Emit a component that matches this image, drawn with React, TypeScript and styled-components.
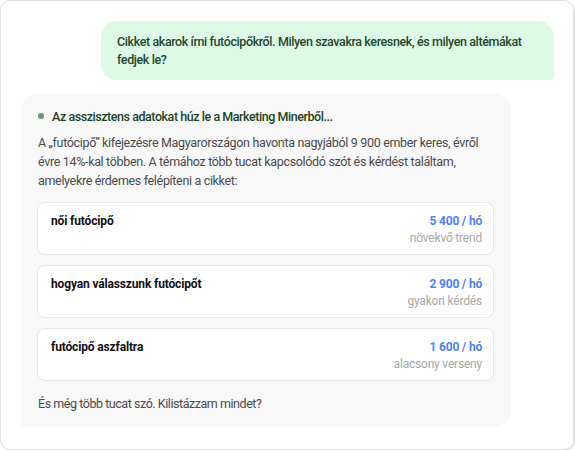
import styled, { createGlobalStyle } from "styled-components";

const GlobalStyle = createGlobalStyle`
  html, body {
    margin: 0;
    padding: 0;
    background: #ffffff;
  }
  * {
    box-sizing: border-box;
  }
`;

type Keyword = {
  term: string;
  volume: string;
  note: string;
};

const keywords: Keyword[] = [
  { term: "női futócipő", volume: "5 400 / hó", note: "növekvő trend" },
  { term: "hogyan válasszunk futócipőt", volume: "2 900 / hó", note: "gyakori kérdés" },
  { term: "futócipő aszfaltra", volume: "1 600 / hó", note: "alacsony verseny" },
];

const App = () => {
  return (
    <>
      <GlobalStyle />
      <Frame>
        <UserBubble>
          Cikket akarok írni futócipőkről. Milyen szavakra keresnek, és milyen altémákat
          fedjek le?
        </UserBubble>
        <AssistantBubble>
          <Status>
            <Dot />
            Az asszisztens adatokat húz le a Marketing Minerből...
          </Status>
          <Paragraph>
            A „futócipő” kifejezésre Magyarországon havonta nagyjából 9 900 ember keres, évről
            évre 14%-kal többen. A témához több tucat kapcsolódó szót és kérdést találtam,
            amelyekre érdemes felépíteni a cikket:
          </Paragraph>
          <KeywordList>
            {keywords.map((item) => (
              <KeywordCard key={item.term}>
                <Term>{item.term}</Term>
                <Stats>
                  <Volume>{item.volume}</Volume>
                  <Note>{item.note}</Note>
                </Stats>
              </KeywordCard>
            ))}
          </KeywordList>
          <Footnote>És még több tucat szó. Kilistázzam mindet?</Footnote>
        </AssistantBubble>
      </Frame>
    </>
  );
};

export default App;

const Frame = styled.div`
  width: 574px;
  height: 450px;
  border: 1px solid #e2e2e2;
  border-radius: 10px;
  box-shadow: 1px 1px 0 #e2e2e2;
  padding: 20px 19px 0 20px;
  display: flex;
  flex-direction: column;
  gap: 14px;
  font-family: Roboto, "Liberation Sans", sans-serif;
`;

const UserBubble = styled.div`
  align-self: flex-end;
  width: 453px;
  background: #ddfae6;
  color: #24482b;
  font-size: 12.5px;
  font-weight: 500;
  line-height: 18px;
  letter-spacing: -0.4px;
  padding: 12px 16px 11px 16px;
  border-radius: 16px 16px 4px 16px;
`;

const AssistantBubble = styled.div`
  width: 490px;
  background: #f8f8f8;
  border-radius: 16px 16px 16px 4px;
  padding: 13px 17px 14px 16px;
  display: flex;
  flex-direction: column;
`;

const Status = styled.div`
  display: flex;
  align-items: center;
  gap: 8px;
  padding-left: 1px;
  height: 18px;
  color: #1c4527;
  font-size: 12.5px;
  font-weight: 500;
  letter-spacing: -0.45px;
  margin-bottom: 8px;
`;

const Dot = styled.span`
  width: 6px;
  height: 6px;
  border-radius: 50%;
  background: #5f9a74;
`;

const Paragraph = styled.p`
  margin: 0;
  padding-left: 1px;
  color: #4b4b4b;
  font-size: 12.5px;
  line-height: 19px;
  letter-spacing: -0.33px;
`;

const Footnote = styled(Paragraph)`
  letter-spacing: -0.45px;
`;

const KeywordList = styled.div`
  display: flex;
  flex-direction: column;
  gap: 10px;
  margin: 12px 0 13px 0;
`;

const KeywordCard = styled.div`
  display: flex;
  justify-content: space-between;
  align-items: flex-start;
  background: #ffffff;
  border: 1px solid #e6e6e6;
  border-radius: 8px;
  height: 53px;
  padding: 10px 11px 0 13px;
`;

const Term = styled.span`
  color: #111111;
  font-size: 12px;
  font-weight: 700;
  line-height: 17px;
  letter-spacing: -0.15px;
`;

const Stats = styled.div`
  display: flex;
  flex-direction: column;
  align-items: flex-end;
`;

const Volume = styled.span`
  color: #4f83f5;
  font-size: 12px;
  font-weight: 700;
  line-height: 17px;
  letter-spacing: -0.2px;
`;

const Note = styled.span`
  color: #a8a8a8;
  font-size: 12px;
  line-height: 17px;
  letter-spacing: -0.2px;
`;
